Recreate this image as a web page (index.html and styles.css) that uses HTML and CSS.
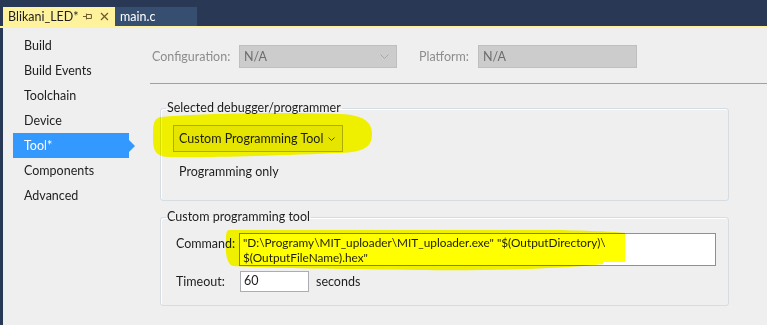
FILE: index.html
```html
<!DOCTYPE html>
<html lang="en">
<head>
    <meta charset="UTF-8">
    <title>Blikani_LED - Tool</title>
    <link rel="stylesheet" href="styles.css">
</head>
<body>
    <div class="window">
        <div class="tabbar">
            <div class="tab active">
                <span class="tab-title">Blikani_LED*</span>
                <svg class="pin" width="9" height="9" viewBox="0 0 9 9">
                    <path d="M0 4.5H3M3.5 1.5V7.5M3.5 2.5H8.5V6.5H3.5" fill="none" stroke="#6b5a2a" stroke-width="1"/>
                </svg>
                <svg class="close" width="9" height="9" viewBox="0 0 9 9">
                    <path d="M1 1L8 8M8 1L1 8" stroke="#6b5a2a" stroke-width="1.2"/>
                </svg>
            </div>
            <div class="tab">main.c</div>
        </div>
        <div class="tabline"></div>

        <div class="body">
            <ul class="nav">
                <li>Build</li>
                <li>Build Events</li>
                <li>Toolchain</li>
                <li>Device</li>
                <li class="active">Tool*</li>
                <li>Components</li>
                <li>Advanced</li>
            </ul>

            <div class="panel">
                <div class="config-row">
                    <span class="config-label">Configuration:</span>
                    <div class="select disabled config-select">
                        <span>N/A</span>
                        <svg class="chev" width="9" height="5" viewBox="0 0 9 5"><path d="M0.5 0.5L4.5 4.5L8.5 0.5" fill="none" stroke="#a8a8a8"/></svg>
                    </div>
                    <span class="config-label platform-label">Platform:</span>
                    <div class="select disabled platform-select">
                        <span>N/A</span>
                    </div>
                </div>
                <hr class="divider">

                <fieldset class="group debugger">
                    <legend>Selected debugger/programmer</legend>
                    <div class="select tool-select">
                        <span>Custom Programming Tool</span>
                        <svg class="chev" width="7" height="4" viewBox="0 0 7 4"><path d="M0.5 0.5L3.5 3.5L6.5 0.5" fill="none" stroke="#555"/></svg>
                    </div>
                    <div class="note">Programming only</div>
                </fieldset>

                <fieldset class="group custom">
                    <legend>Custom programming tool</legend>
                    <div class="field">
                        <span class="field-label">Command:</span>
                        <div class="textbox command">"D:\Programy\MIT_uploader\MIT_uploader.exe" "$(OutputDirectory)\<br>$(OutputFileName).hex"</div>
                    </div>
                    <div class="field timeout-row">
                        <span class="field-label">Timeout:</span>
                        <div class="textbox timeout">60</div>
                        <span class="unit">seconds</span>
                    </div>
                </fieldset>
            </div>
        </div>

        <!-- marker strokes drawn over the screenshot -->
        <svg class="marker" width="767" height="325" viewBox="0 0 767 325">
            <path d="M160 117C200 113 290 112 340 114C362 115 372 121 372 134C372 147 364 152 340 153C290 155 210 158 168 157C155 156 153 150 153 138C153 126 153 119 160 117Z" fill="#ffff00"/>
            <path d="M229 230L560 230C600 231 618 232 625 233L625 262L603 262L603 264C560 269 480 271 420 270C330 269 262 268 233 266C226 264 225 250 226 240C226 234 226 231 229 230Z" fill="#ffff00"/>
        </svg>
    </div>
</body>
</html>
```

FILE: styles.css
```css
body {
    margin: 0;
    font-family: Lato, "Noto Sans", sans-serif;
    font-size: 12.5px;
    color: #1e1e1e;
    background-color: #efefef;
}
.window {
    position: relative;
    width: 767px;
    height: 325px;
    overflow: hidden;
    background-color: #efefef;
}
.tabbar {
    display: flex;
    align-items: flex-end;
    height: 26px;
    padding-left: 3px;
    box-sizing: border-box;
    background-color: #293955;
}
.tab {
    display: flex;
    align-items: center;
    height: 19px;
    padding: 0 6px 0 5px;
    color: #ffffff;
    background-color: #364e6f;
    width: 82px;
    box-sizing: border-box;
}
.tab.active {
    width: 112px;
    color: #1e1e1e;
    background-color: #fff29d;
}
.tab-title {
    width: 76px;
}
.pin {
    margin-right: 8px;
}
.tabline {
    height: 2px;
    background-color: #fff29d;
}
.body {
    display: flex;
    height: 297px;
    border-left: 3px solid #293955;
}
.nav {
    list-style: none;
    margin: 0;
    padding: 5px 0 0 10px;
    width: 137px;
}
.nav li {
    position: relative;
    width: 116px;
    height: 25px;
    line-height: 25px;
    padding-left: 11px;
    box-sizing: border-box;
}
.nav li.active {
    background-color: #3399ff;
    color: #ffffff;
}
.nav li.active::after {
    content: "";
    position: absolute;
    right: -6px;
    top: 7px;
    border-left: 6px solid #3399ff;
    border-top: 6px solid transparent;
    border-bottom: 6px solid transparent;
}
.panel {
    flex: 1;
    padding-top: 17px;
}
.config-row {
    display: flex;
    align-items: center;
    height: 23px;
    margin-left: 2px;
}
.config-label {
    color: #8d8d8d;
    width: 87px;
}
.platform-label {
    width: 59px;
    margin-left: 22px;
}
.select {
    display: flex;
    align-items: center;
    justify-content: space-between;
    box-sizing: border-box;
    border: 1px solid #acacac;
    padding: 0 7px 0 5px;
}
.select.disabled {
    height: 23px;
    background-color: #cccccc;
    border-color: #bfbfbf;
    color: #6d6d6d;
    padding-left: 4px;
}
.config-select {
    width: 158px;
}
.platform-select {
    width: 159px;
}
.divider {
    margin: 15px 0 0 0;
    border: none;
    border-top: 1px solid #a0a0a0;
    height: 0;
}
.group {
    margin: 0 38px 0 10px;
    padding: 9px 12px 20px 12px;
    border: 1px solid #d5dce2;
    border-radius: 3px;
    box-shadow: inset 1px 1px 0 #ffffff;
}
.group legend {
    margin-left: -7px;
    padding: 0 1px;
    line-height: 16px;
}
.debugger {
    margin-top: 16px;
}
.tool-select {
    width: 170px;
    height: 27px;
    background-color: #e5e5e5;
    white-space: nowrap;
}
.note {
    margin: 12px 0 0 6px;
    line-height: 16px;
}
.custom {
    margin-top: 8px;
    padding: 8px 12px 13px 12px;
}
.field {
    display: flex;
    align-items: flex-start;
}
.field-label {
    width: 63px;
    padding-left: 3px;
    padding-top: 3px;
    line-height: 15px;
}
.textbox {
    box-sizing: border-box;
    background-color: #ffffff;
    border: 1px solid #abadb3;
    padding: 1px 3px;
    line-height: 15px;
}
.command {
    width: 477px;
    height: 33px;
    border-color: #569de5;
    white-space: nowrap;
    font-size: 11.8px;
}
.timeout-row {
    margin-top: 5px;
    align-items: center;
}
.timeout-row .field-label {
    padding-top: 0;
}
.timeout {
    width: 69px;
    height: 21px;
    margin-left: 1px;
}
.unit {
    margin-left: 7px;
}
.marker {
    position: absolute;
    top: 0;
    left: 0;
    mix-blend-mode: multiply;
    pointer-events: none;
}
```
